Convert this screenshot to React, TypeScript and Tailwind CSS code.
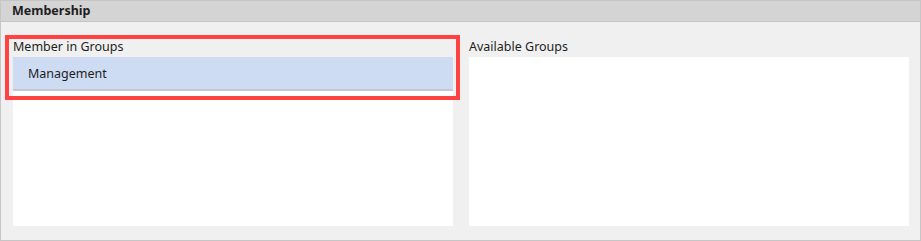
export default function App() {
  return (
    <div className="w-[921px] h-[241px] bg-[#f0f0f0] border border-[#c6c6c6] flex flex-col text-[12.5px] text-[#1e1e1e] font-['Noto_Sans',sans-serif] relative">
      {/* section header */}
      <div className="h-[21px] shrink-0 bg-[#d4d4d4] border-b border-[#c4c4c4] flex items-center pl-[11px]">
        <span className="font-bold">Membership</span>
      </div>

      <div className="flex-1 flex gap-[16px] pl-[12px] pr-[11px] pt-[14px] pb-[14px]">
        <div className="w-[440px] flex flex-col">
          <div className="h-[21px] flex items-center pt-[1px]">Member in Groups</div>
          <div className="flex-1 bg-white">
            <div className="h-[34px] bg-[#cddcf3] border-b-2 border-[#c3c9d4] flex items-center pl-[15px] pt-[2px]">
              Management
            </div>
          </div>
        </div>
        <div className="flex-1 flex flex-col">
          <div className="h-[21px] flex items-center pt-[1px]">Available Groups</div>
          <div className="flex-1 bg-white"></div>
        </div>
      </div>

      {/* highlight annotation */}
      <div className="absolute left-[4px] top-[34px] w-[455px] h-[65px] border-4 border-[#ff4242] pointer-events-none" />
    </div>
  );
}
